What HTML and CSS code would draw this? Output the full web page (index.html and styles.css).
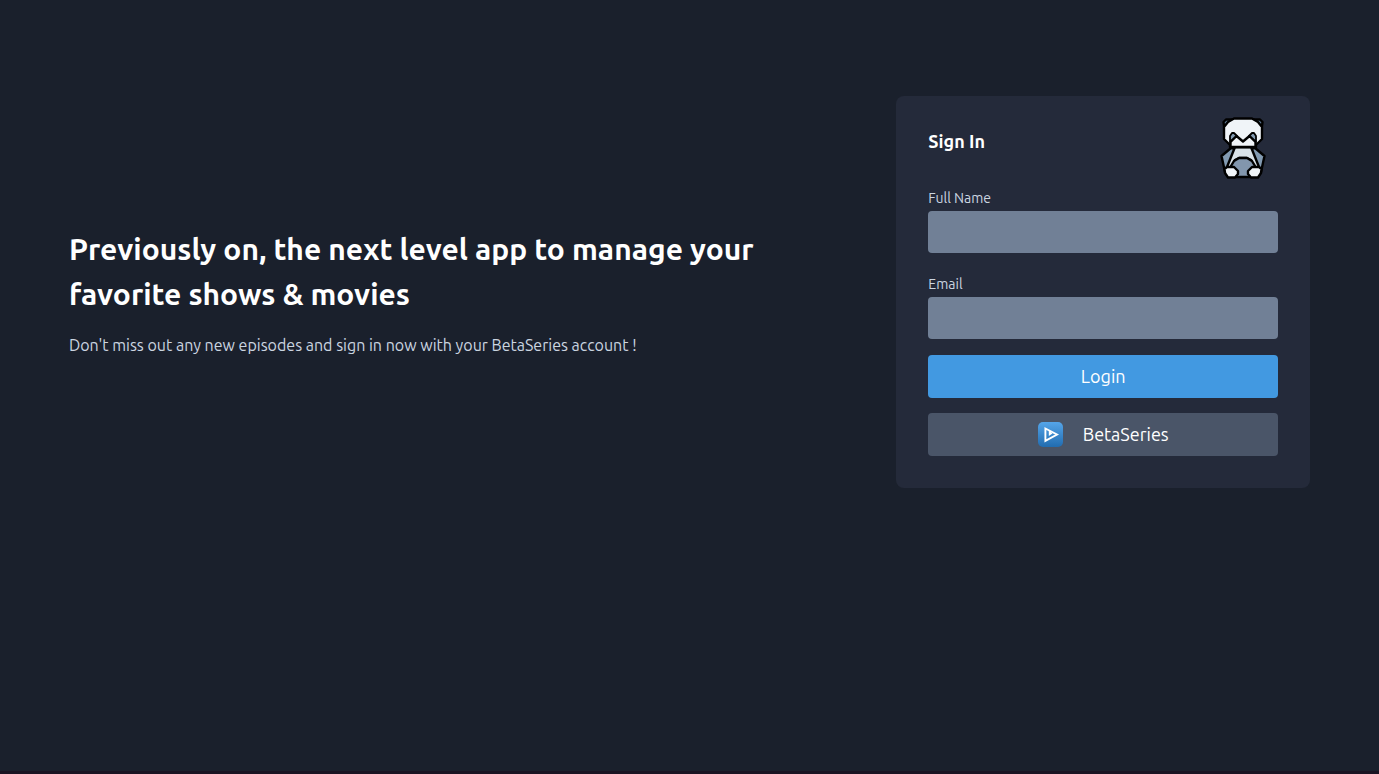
FILE: index.html
```html
<!DOCTYPE html>
<html lang="en">
<head>
<meta charset="utf-8">
<meta name="viewport" content="width=device-width, initial-scale=1">
<title>Previously on</title>
<link rel="stylesheet" href="styles.css">
</head>
<body>
<main class="landing">
  <section class="intro">
    <h1 class="intro-title">Previously on, the next level app to manage your favorite shows &amp; movies</h1>
    <p class="intro-text">Don't miss out any new episodes and sign in now with your BetaSeries account !</p>
  </section>
  <form class="card">
    <h2 class="card-title">Sign In</h2>
    <svg class="panda" viewBox="0 0 46 62" aria-hidden="true" stroke="#000" stroke-width="2.4" stroke-linejoin="round" stroke-linecap="round">
      <path fill="#829ab1" d="M11 31L1.500 39L5 55L12 50L17 32ZM35 31L44.500 39L41 55L34 50L29 32Z"/>
      <path fill="#d9e2e8" d="M15 30H31L39 50L34 52L31 43L27 41H19L15 43L12 52L7 50Z"/>
      <path fill="#8296ad" d="M14 60L11 49L14 44L19 41H27L32 44L35 49L32 60Z"/>
      <path fill="#f0f4f8" d="M4.500 52L7 50H14L18 54V57L15 60.500H8L5 56ZM41.500 52L39 50H32L28 54V57L31 60.500H38L41 56Z"/>
      <path fill="#627d98" d="M4 9L3.500 5L6 2.500H12M42 9L42.500 5L40 2.500H34"/>
      <path fill="#f0f4f8" d="M14 1.500H32L38 5L42 10V22L36 28V30H10V28L4 22V10L8 5Z"/>
      <path fill="#829ab1" stroke-width="1.800" d="M10 25V19L12 16H14L17 19ZM36 25V19L34 16H32L29 19Z"/>
      <path fill="#f0f4f8" d="M10.500 30V25L16.500 19L23 24.500L29.500 19L35.500 25V30Z"/>
    </svg>
    <div class="field">
      <label class="field-label" for="full-name">Full Name</label>
      <input class="field-input" type="text" id="full-name" name="full-name">
    </div>
    <div class="field">
      <label class="field-label" for="email">Email</label>
      <input class="field-input" type="email" id="email" name="email">
    </div>
    <div class="actions">
      <button class="button button-login" type="submit">Login</button>
      <button class="button button-beta" type="button">
        <svg class="beta-logo" viewBox="0 0 25 25" aria-hidden="true">
          <defs><linearGradient id="beta-fill" x1="0" y1="0" x2="0" y2="1"><stop offset="0" stop-color="#55a5e9"/><stop offset="1" stop-color="#216cb0"/></linearGradient></defs>
          <rect width="25" height="25" rx="5" fill="url(#beta-fill)"/>
          <path d="M7.400 6.500L19 12.500L7.400 18.800Z" fill="none" stroke="#fff" stroke-width="1.900"/>
          <path d="M10.800 8V14L14.500 11.500Z" fill="#fff"/>
        </svg>
        <span>BetaSeries</span>
      </button>
    </div>
  </form>
</main>
</body>
</html>
```
FILE: styles.css
```css
* {
  box-sizing: border-box;
}

body {
  margin: 0;
  min-height: 100vh;
  background: #1a202c;
  border-bottom: 3px solid #1a1423;
  color: #cbd5e0;
  font-family: Ubuntu, "Noto Sans", sans-serif;
  font-size: 16px;
  line-height: 24px;
}

.landing {
  display: grid;
  grid-template-columns: 2fr 1fr;
  align-items: center;
  padding: 96px 5%;
}

.intro {
  padding-right: 128px;
}

.intro-title {
  margin: 0 0 16px;
  color: #fff;
  font-size: 30px;
  font-weight: 600;
  line-height: 45px;
}

.intro-text {
  margin: 0;
}

.card {
  position: relative;
  padding: 32px;
  border-radius: 8px;
  background: #242a3a;
}

.card-title {
  margin: 0 0 28px;
  color: #fff;
  font-size: 18px;
  font-weight: 600;
  line-height: 27px;
}

.panda {
  position: absolute;
  top: 21px;
  right: 44px;
  width: 46px;
  height: 62px;
}

.field {
  margin-bottom: 16px;
}

.field-label {
  display: block;
  padding-top: 2px;
  font-size: 14px;
  line-height: 26px;
}

.field-input {
  display: block;
  width: 100%;
  height: 42px;
  padding: 8px 16px;
  border: 0;
  border-radius: 4px;
  background: #718096;
  color: #fff;
  font: inherit;
}

.actions {
  display: grid;
  gap: 15px;
}

.button {
  display: flex;
  align-items: center;
  justify-content: center;
  gap: 20px;
  padding: 8px 32px;
  border: 0;
  border-radius: 4px;
  color: #fff;
  font-family: inherit;
  font-size: 18px;
  line-height: 27px;
  cursor: pointer;
}

.button-login {
  background: #4299e1;
}

.button-beta {
  background: #4a5568;
}

.beta-logo {
  width: 25px;
  height: 25px;
}

@media (max-width: 800px) {
  .landing {
    grid-template-columns: 1fr;
    gap: 48px;
  }

  .intro {
    padding-right: 0;
  }
}
```
